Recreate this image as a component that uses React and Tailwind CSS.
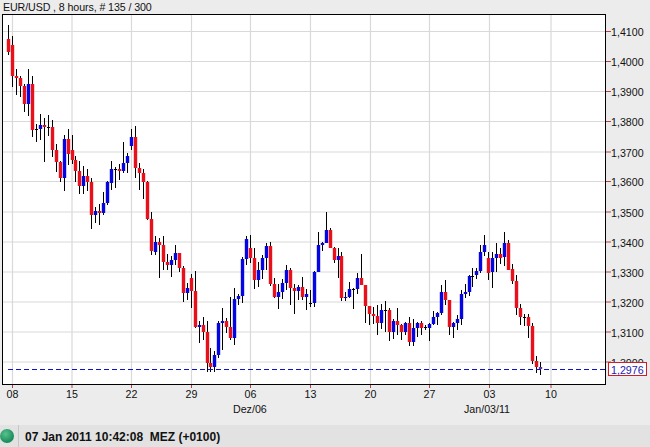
import React from 'react';

// high, low, body top, body bottom, r = red / b = blue / d = doji / p = last tick
const candles = [
  [25,55,39,52,'r'],[36,87,45,76,'r'],[69,95,76,78,'r'],[76,97,78,86,'r'],[84,112,86,104,'r'],
  [69,116,84,104,'b'],[76,137,84,130,'r'],[124,142,129,129,'d'],[114,140,125,129,'b'],[118,162,125,127,'r'],
  [115,136,127,127,'d'],[120,157,127,150,'r'],[144,172,150,162,'r'],[161,182,162,178,'r'],[135,191,139,178,'b'],
  [129,165,139,154,'r'],[135,164,150,160,'r'],[156,182,160,171,'r'],[161,194,171,186,'r'],[166,194,176,186,'b'],
  [169,191,176,182,'r'],[178,229,182,215,'r'],[207,223,211,215,'b'],[204,225,211,213,'r'],[192,215,203,213,'b'],
  [181,205,182,203,'b'],[161,190,169,183,'b'],[167,188,169,169,'d'],[164,180,169,171,'r'],[142,173,163,171,'b'],
  [153,173,156,163,'b'],[129,150,137,146,'b'],[126,178,137,168,'r'],[163,190,168,173,'r'],[169,199,173,182,'r'],
  [181,220,182,219,'r'],[212,255,219,251,'r'],[236,255,242,252,'b'],[238,278,242,245,'r'],[236,270,245,262,'r'],
  [254,270,262,265,'r'],[256,277,260,265,'b'],[245,265,253,260,'b'],[253,272,253,268,'r'],[266,302,268,293,'r'],
  [283,300,288,293,'b'],[274,308,278,291,'r'],[271,328,291,327,'r'],[321,343,325,327,'b'],[317,340,325,332,'r'],
  [321,372,332,363,'r'],[348,372,363,367,'r'],[351,372,355,367,'b'],[321,358,323,355,'b'],[308,350,321,323,'b'],
  [318,333,321,327,'r'],[297,340,327,338,'r'],[288,345,299,338,'b'],[294,305,296,299,'b'],[257,303,259,296,'b'],
  [236,265,239,259,'b'],[235,263,248,258,'r'],[248,289,258,280,'r'],[262,287,270,280,'b'],[255,279,258,270,'b'],
  [243,270,246,258,'b'],[242,286,246,284,'r'],[278,298,284,297,'r'],[284,309,292,297,'b'],[279,299,283,292,'b'],
  [265,290,270,283,'b'],[268,305,270,288,'r'],[284,314,288,291,'r'],[285,300,287,291,'b'],[277,300,287,297,'r'],
  [289,310,294,297,'b'],[290,307,303,303,'d'],[271,307,272,303,'b'],[232,272,245,272,'b'],[242,251,243,245,'b'],
  [212,243,230,243,'b'],[228,248,230,248,'r'],[247,263,248,260,'r'],[248,278,256,260,'b'],[252,301,256,298,'r'],
  [292,301,297,298,'b'],[282,298,289,297,'b'],[288,309,289,289,'d'],[273,294,278,289,'b'],[254,285,278,285,'r'],
  [285,323,285,306,'r'],[306,325,306,314,'r'],[307,324,314,316,'r'],[305,335,316,323,'r'],[304,329,310,323,'b'],
  [301,332,310,310,'d'],[308,341,310,332,'r'],[319,339,321,332,'b'],[308,335,321,325,'r'],[324,340,325,332,'r'],
  [322,335,323,332,'b'],[317,346,323,342,'r'],[319,346,328,342,'b'],[322,337,323,328,'b'],[321,335,323,328,'r'],
  [325,330,327,327,'d'],[323,341,324,328,'b'],[311,325,317,324,'b'],[312,325,313,317,'b'],[285,315,292,313,'b'],
  [280,305,292,300,'r'],[300,335,300,327,'r'],[322,338,323,327,'b'],[315,330,319,323,'b'],[290,325,294,319,'b'],
  [284,298,292,294,'b'],[275,296,276,292,'b'],[268,287,276,276,'d'],[268,279,271,275,'b'],[245,273,252,271,'b'],
  [235,256,245,252,'b'],[252,280,258,273,'r'],[252,288,258,272,'b'],[243,272,254,258,'b'],[248,264,254,258,'r'],
  [232,266,243,257,'b'],[240,270,243,270,'r'],[264,284,269,281,'r'],[275,315,281,308,'r'],[304,325,308,317,'r'],
  [314,326,317,317,'d'],[314,338,317,326,'r'],[323,364,326,361,'r'],[356,373,361,367,'r'],[362,375,367,369,'p'],
];

const bodyColor = { r: '#e8101a', b: '#0505e0', p: '#7a2a8c' };

const priceLevels = ['1,4100','1,4000','1,3900','1,3800','1,3700','1,3600','1,3500','1,3400','1,3300','1,3200','1,3100','1,3000'];
const priceY = [31.5,61.5,91.5,121.5,152,181.5,212,242,272,302,332,362];

const dateTicks = [
  { x: 12.5, label: '08' },{ x: 72, label: '15' },{ x: 131.5, label: '22' },{ x: 191.5, label: '29' },
  { x: 250.5, label: '06' },{ x: 310.5, label: '13' },{ x: 370.5, label: '20' },{ x: 429.5, label: '27' },
  { x: 489.5, label: '03' },{ x: 551, label: '10' },
];

const Chart = () => (
  <svg width="650" height="412" viewBox="0 13 650 412" className="block" fontFamily="'Liberation Sans', Arial, sans-serif" fontSize="10.67" fill="#111">
    <rect x="3" y="14" width="602" height="370" fill="#fff" />
    {/* grid */}
    {priceY.map((y) => (
      <line key={y} x1="3" x2="605" y1={y} y2={y} stroke="#d9d9d9" strokeWidth="1.2" />
    ))}
    {dateTicks.map((t) => (
      <line key={t.x} x1={t.x} x2={t.x} y1="14" y2="384" stroke="#d9d9d9" strokeWidth="1.2" />
    ))}

    {/* candles */}
    {candles.map(([high, low, top, bottom, kind], i) => {
      const px = Math.round(8 + 3.97 * i);
      return (
        <g key={i}>
          <rect x={px} y={high} width="1" height={low - high} fill="#000" />
          {kind === 'd' ? (
            <rect x={px - 1} y={top} width="3" height="1" fill="#000" />
          ) : (
            <rect x={px - 1.2} y={top} width="3.4" height={bottom - top} fill={bodyColor[kind]} />
          )}
        </g>
      );
    })}

    {/* last price line */}
    <line x1="8" x2="605" y1="369.5" y2="369.5" stroke="#1010d0" strokeWidth="1.2" strokeDasharray="5 3" />

    {/* frame */}
    <rect x="2.5" y="14.5" width="603" height="370" fill="none" stroke="#000" strokeWidth="1" />

    {/* y axis */}
    {priceLevels.map((label, i) => (
      <g key={label}>
        <line x1="606" x2="611" y1={priceY[i]} y2={priceY[i]} stroke="#b8404a" strokeWidth="1" />
        <text x="611" y={priceY[i] + 4.5}>{label}</text>
      </g>
    ))}

    {/* x axis */}
    {dateTicks.map((t) => (
      <g key={t.label}>
        <line x1={t.x} x2={t.x} y1="385" y2="388" stroke="#b8404a" strokeWidth="1" />
        <text x={t.x - 6} y="398">{t.label}</text>
      </g>
    ))}
    <text x="233" y="413">Dez/06</text>
    <text x="464" y="413">Jan/03/11</text>

    {/* last price tag */}
    <rect x="608.5" y="362.5" width="38" height="13" fill="#fff" stroke="#d01c28" strokeWidth="1" />
    <text x="611" y="373.5" fill="#1a1ab4">1,2976</text>
  </svg>
);

const App = () => {
  return (
    <div className="flex h-[447px] w-[650px] flex-col overflow-hidden bg-[#ececec] font-['Liberation_Sans',Arial,sans-serif] text-[#111]">
      <div className="h-[13px] pl-[3px] text-[10.67px] leading-[14px] tracking-[-0.1px] whitespace-pre">EUR/USD , 8 hours, # 135 / 300</div>
      <Chart />
      <div className="flex h-[22px] items-center bg-[#e2e2e2]">
        <div className="flex h-full w-[19px] items-center border-r border-[#c8c8c8]">
          <span className="block h-[14px] w-[14px] rounded-full bg-[radial-gradient(circle_at_40%_35%,#5cc08e,#1f9460_60%,#0f6b45)]" />
        </div>
        <span className="pt-[2px] pl-[6px] text-[12px] font-bold whitespace-pre text-[#111]">07 Jan 2011 10:42:08  MEZ (+0100)</span>
      </div>
    </div>
  );
};

export default App;
